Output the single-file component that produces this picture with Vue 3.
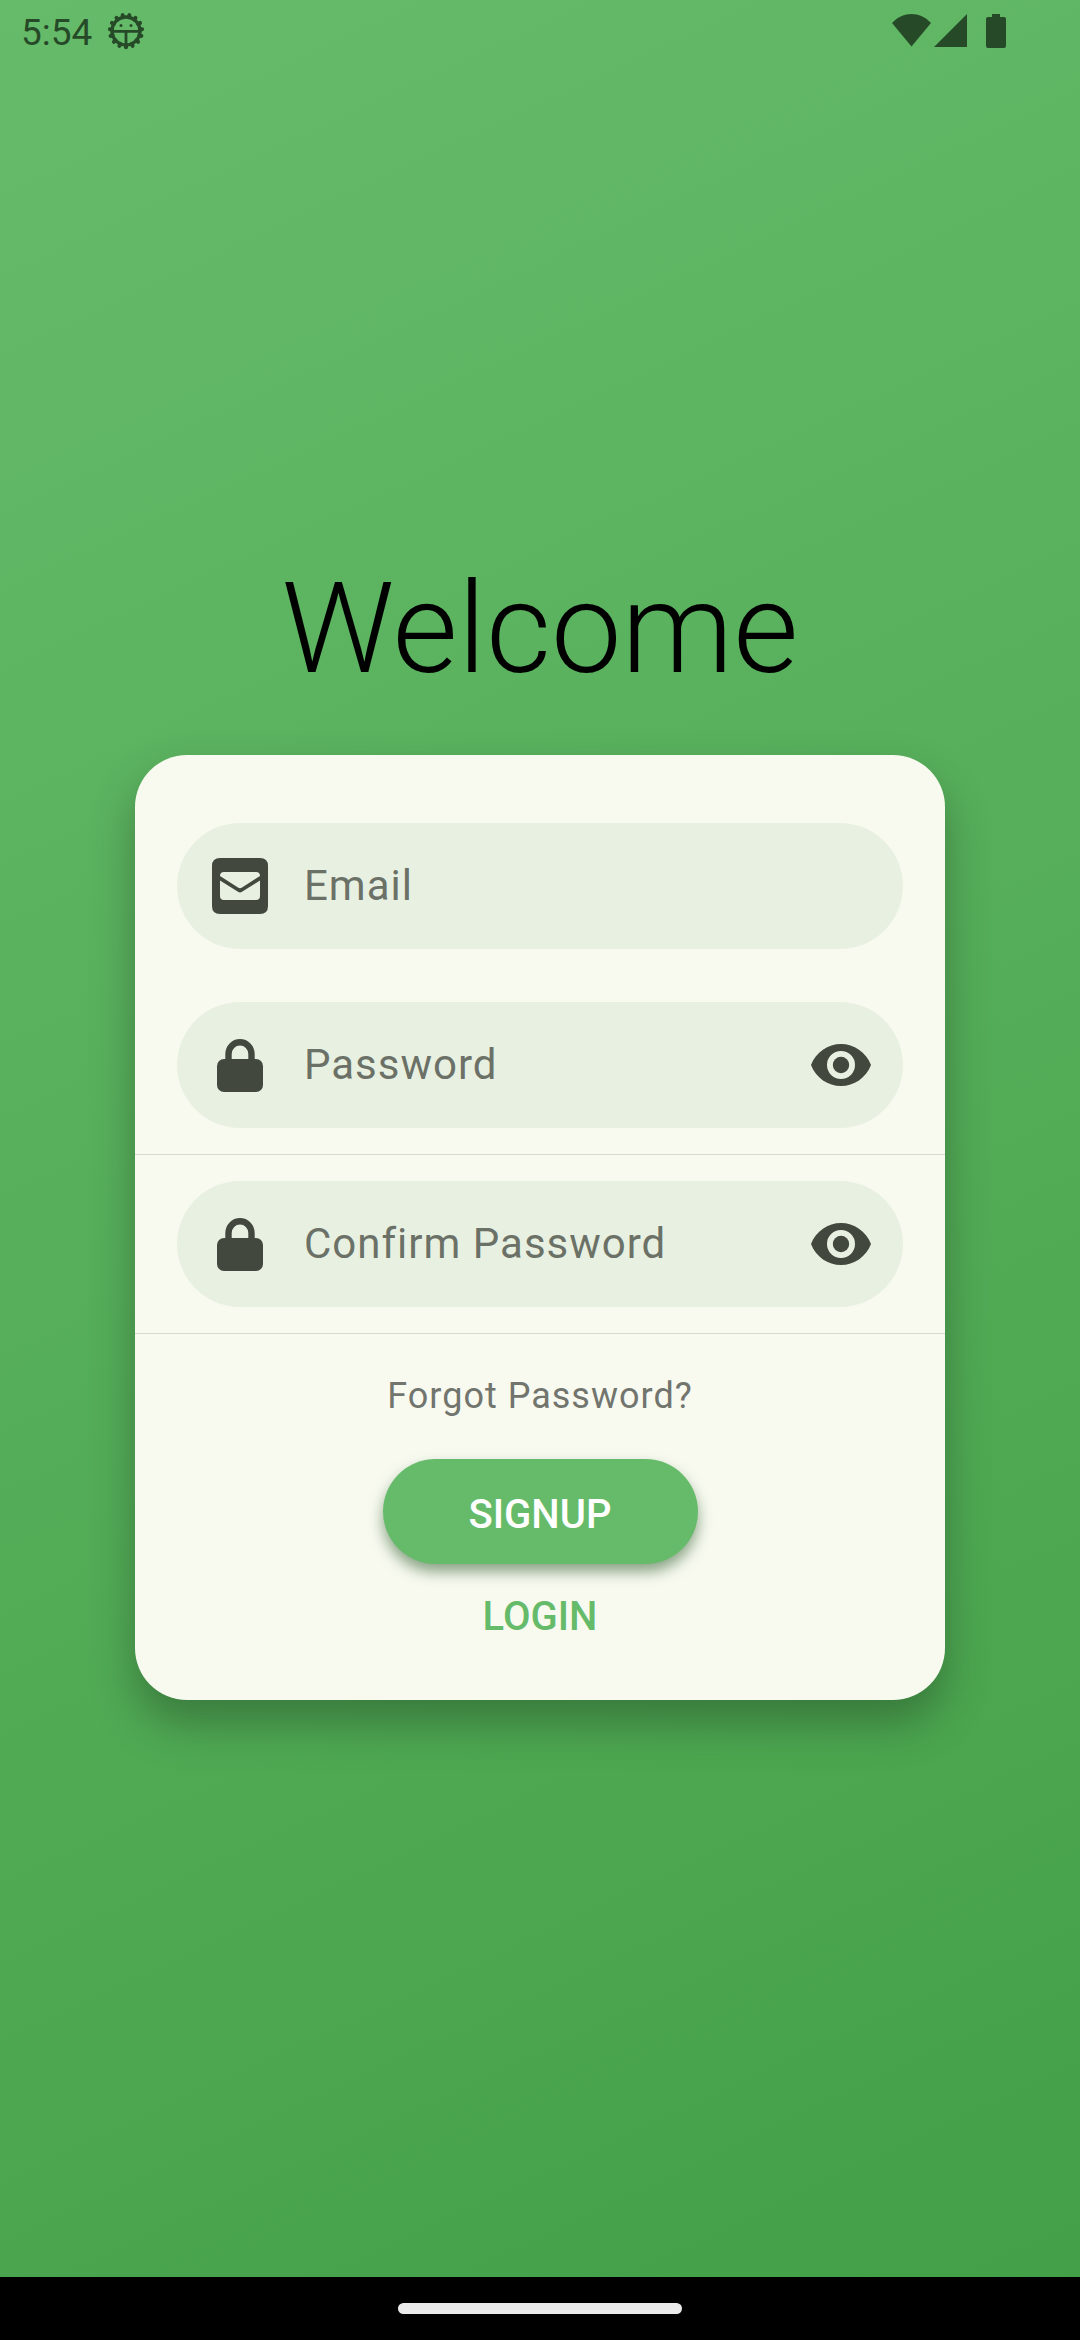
<script setup>
import { reactive } from 'vue'

const fields = reactive([
  { id: 'email', label: 'Email', icon: 'mail', secret: false, visible: true, divided: false, value: '' },
  { id: 'password', label: 'Password', icon: 'lock', secret: true, visible: false, divided: true, value: '' },
  { id: 'confirm', label: 'Confirm Password', icon: 'lock', secret: true, visible: false, divided: true, value: '' },
])

const teeth = Array.from({ length: 15 }, (_, i) => 12 + i * 24)
</script>

<template>
  <div class="screen">
    <header class="status">
      <div class="status-side">
        <span class="clock">5:54</span>
        <svg class="bug" viewBox="0 0 38 38" aria-hidden="true">
          <g stroke="currentColor" stroke-width="4" stroke-linecap="round">
            <line v-for="a in teeth" :key="a" x1="19" y1="5" x2="19" y2="2.8" :transform="`rotate(${a} 19 19)`" />
          </g>
          <circle cx="19" cy="19" r="14" fill="none" stroke="currentColor" stroke-width="3.4" />
          <path d="M6 19.4H32M19 19.4V32" fill="none" stroke="currentColor" stroke-width="2.8" />
          <circle cx="14" cy="13.6" r="1.5" fill="currentColor" />
          <circle cx="24" cy="13.6" r="1.5" fill="currentColor" />
        </svg>
      </div>
      <div class="status-side">
        <svg class="wifi" viewBox="0 0 39 34" aria-hidden="true">
          <path d="M0 9C11-3 28-3 39 9L19.5 32.6Z" fill="currentColor" />
        </svg>
        <svg class="signal" viewBox="0 0 33 34" aria-hidden="true">
          <path d="M0 33H33V0Z" fill="currentColor" />
        </svg>
        <svg class="battery" viewBox="0 0 20 34" aria-hidden="true">
          <path d="M6 0H14V3H18Q20 3 20 5V32Q20 34 18 34H2Q0 34 0 32V5Q0 3 2 3H6Z" fill="currentColor" />
        </svg>
      </div>
    </header>

    <main class="content">
      <h1 class="title">Welcome</h1>
      <form class="card" @submit.prevent>
        <div v-for="f in fields" :key="f.id" class="row" :class="{ divided: f.divided }">
          <div class="field">
            <svg v-if="f.icon === 'mail'" class="lead" viewBox="0 0 56 56" aria-hidden="true">
              <path
                fill="currentColor"
                fill-rule="evenodd"
                d="M8 0H48Q56 0 56 8V48Q56 56 48 56H8Q0 56 0 48V8Q0 0 8 0ZM12 14Q8 14 8 18L26 29.6Q28 31 30 29.6L48 18Q48 14 44 14ZM8 22.4V38Q8 42 12 42H44Q48 42 48 38V22.4L30 33.8Q28 35 26 33.8Z"
              />
            </svg>
            <svg v-else class="lead" viewBox="0 0 56 56" aria-hidden="true">
              <rect x="5" y="22" width="46" height="33" rx="7" fill="currentColor" />
              <path d="M16.5 24V17A11.5 11.8 0 0 1 39.5 17V24" fill="none" stroke="currentColor" stroke-width="6.4" />
            </svg>
            <input
              :id="f.id"
              v-model="f.value"
              class="input"
              :type="f.visible ? 'text' : 'password'"
              :placeholder="f.label"
              :aria-label="f.label"
            />
            <button
              v-if="f.secret"
              type="button"
              class="toggle"
              aria-label="Toggle visibility"
              @click="f.visible = !f.visible"
            >
              <svg class="eye" viewBox="0 0 60 42" aria-hidden="true">
                <path
                  fill="currentColor"
                  fill-rule="evenodd"
                  d="M0 21C5 8 17 0 30 0S55 8 60 21C55 34 43 42 30 42S5 34 0 21ZM30 7A14 14 0 1 0 30 35A14 14 0 1 0 30 7Z"
                />
                <circle cx="30" cy="21" r="8.2" fill="currentColor" />
              </svg>
            </button>
          </div>
        </div>
        <div class="actions">
          <a class="forgot" href="#">Forgot Password?</a>
          <button type="submit" class="signup">SIGNUP</button>
          <button type="button" class="login">LOGIN</button>
        </div>
      </form>
    </main>

    <footer class="nav"><span class="handle"></span></footer>
  </div>
</template>

<style>
body {
  margin: 0;
}
</style>

<style scoped>
.screen {
  min-height: 100vh;
  display: flex;
  flex-direction: column;
  background: linear-gradient(155deg, #66bb6a, #43a047);
  font-family: Roboto, sans-serif;
}

.status {
  display: flex;
  justify-content: space-between;
  align-items: center;
  height: 62px;
  padding: 0 74px 0 21px;
  color: #264a28;
}

.status-side {
  display: flex;
  align-items: center;
}

.clock {
  font-size: 37px;
  line-height: 44px;
  padding-top: 4px;
}

.bug {
  width: 38px;
  height: 38px;
  margin-left: 15px;
}

.wifi {
  width: 39px;
  height: 34px;
}

.signal {
  width: 33px;
  height: 34px;
  margin-left: 3px;
}

.battery {
  width: 20px;
  height: 34px;
  margin-left: 19px;
}

.content {
  flex: 1;
  display: flex;
  flex-direction: column;
  align-items: center;
  justify-content: center;
  padding-bottom: 84px;
}

.title {
  margin: 0;
  font-size: 126px;
  line-height: 148px;
  font-weight: 300;
  color: #000;
}

.card {
  box-sizing: border-box;
  width: 75%;
  margin-top: 52px;
  padding: 42px 0 59px;
  border-radius: 52px;
  background: #f8faf0;
  box-shadow: 0 24px 44px rgba(32, 60, 34, 0.42);
}

.row {
  padding: 26px 42px;
  border-bottom: 1px solid transparent;
}

.divided {
  border-bottom-color: #d5d9ce;
}

.field {
  display: flex;
  align-items: center;
  height: 126px;
  box-sizing: border-box;
  padding: 0 32px 0 35px;
  border-radius: 63px;
  background: #e8f1e1;
  color: #43483f;
}

.lead {
  flex: none;
  width: 56px;
  height: 56px;
}

.input {
  flex: 1;
  min-width: 0;
  margin-left: 36px;
  padding: 0;
  border: 0;
  outline: 0;
  background: none;
  font-family: inherit;
  font-size: 42px;
  line-height: 50px;
  letter-spacing: 1px;
  color: #1a1c18;
}

.input::placeholder {
  color: #6c7168;
  opacity: 1;
}

.toggle {
  display: flex;
  padding: 0;
  border: 0;
  background: none;
  color: inherit;
}

.eye {
  width: 60px;
  height: 42px;
}

.actions {
  display: flex;
  flex-direction: column;
  align-items: center;
  padding-top: 40px;
}

.forgot {
  font-size: 36px;
  line-height: 44px;
  letter-spacing: 1px;
  color: #72746e;
  text-decoration: none;
}

.signup {
  width: 315px;
  height: 105px;
  margin-top: 41px;
  padding: 6px 0 0;
  border: 0;
  border-radius: 53px;
  background: #66bb6a;
  color: #fff;
  font-family: inherit;
  font-size: 40px;
  font-weight: 500;
  box-shadow: 0 8px 14px rgba(30, 80, 30, 0.5);
}

.login {
  margin-top: 29px;
  padding: 0;
  border: 0;
  background: none;
  color: #66bb6a;
  font-family: inherit;
  font-size: 40px;
  line-height: 48px;
  font-weight: 500;
}

.nav {
  display: flex;
  align-items: center;
  justify-content: center;
  height: 63px;
  background: #000;
}

.handle {
  width: 284px;
  height: 11px;
  border-radius: 6px;
  background: #ebebeb;
}
</style>
